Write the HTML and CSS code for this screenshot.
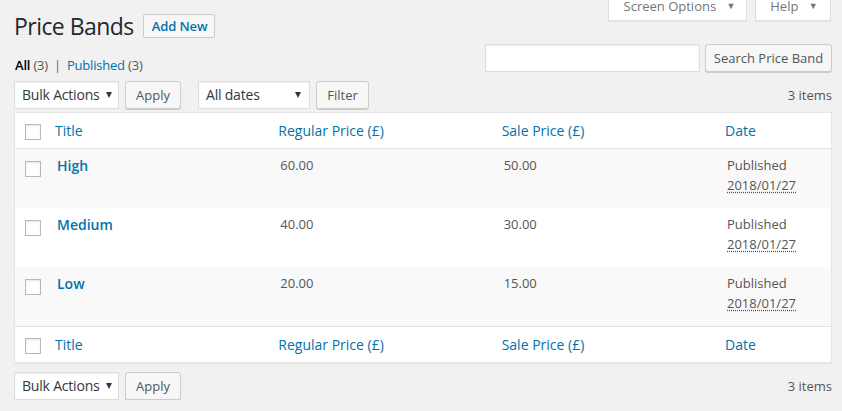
FILE: index.html
```html
<!DOCTYPE html>
<html lang="en">
<head>
<meta charset="utf-8">
<title>Price Bands</title>
<link rel="stylesheet" href="styles.css">
</head>
<body>
<div class="wrap">
  <div class="top">
    <div class="heading">
      <h1 class="title">Price Bands</h1>
      <a class="add-new" href="#">Add New</a>
    </div>
    <div class="screen-links">
      <div class="tab tab-screen">Screen Options <span class="caret">&#9660;</span></div>
      <div class="tab tab-help">Help <span class="caret">&#9660;</span></div>
    </div>
  </div>

  <div class="filters">
    <ul class="subsubsub">
      <li><a class="current" href="#">All</a> <span class="count">(3)</span></li>
      <li class="sep">|</li>
      <li><a href="#">Published</a> <span class="count">(3)</span></li>
    </ul>
    <div class="search-box">
      <div class="input"></div>
      <button class="button search-btn">Search Price Band</button>
    </div>
  </div>

  <div class="tablenav tablenav-top">
    <div class="actions">
      <div class="select select-bulk">Bulk Actions <span class="arrow"></span></div>
      <button class="button btn-apply">Apply</button>
    </div>
    <div class="actions">
      <div class="select select-dates">All dates <span class="arrow"></span></div>
      <button class="button btn-filter">Filter</button>
    </div>
    <div class="num">3 items</div>
  </div>

  <table class="list">
    <colgroup>
      <col class="c-cb"><col class="c-title"><col class="c-reg"><col class="c-sale"><col class="c-date">
    </colgroup>
    <thead>
      <tr>
        <td class="cb"><span class="checkbox"></span></td>
        <th><a href="#">Title</a></th>
        <th><a href="#">Regular Price (£)</a></th>
        <th><a href="#">Sale Price (£)</a></th>
        <th><a href="#">Date</a></th>
      </tr>
    </thead>
    <tbody>
      <tr class="alt">
        <td class="cb"><span class="checkbox"></span></td>
        <td class="t"><a class="row-title" href="#">High</a></td>
        <td>60.00</td>
        <td>50.00</td>
        <td>Published<br><abbr>2018/01/27</abbr></td>
      </tr>
      <tr>
        <td class="cb"><span class="checkbox"></span></td>
        <td class="t"><a class="row-title" href="#">Medium</a></td>
        <td>40.00</td>
        <td>30.00</td>
        <td>Published<br><abbr>2018/01/27</abbr></td>
      </tr>
      <tr class="alt">
        <td class="cb"><span class="checkbox"></span></td>
        <td class="t"><a class="row-title" href="#">Low</a></td>
        <td>20.00</td>
        <td>15.00</td>
        <td>Published<br><abbr>2018/01/27</abbr></td>
      </tr>
    </tbody>
    <tfoot>
      <tr>
        <td class="cb"><span class="checkbox"></span></td>
        <th><a href="#">Title</a></th>
        <th><a href="#">Regular Price (£)</a></th>
        <th><a href="#">Sale Price (£)</a></th>
        <th><a href="#">Date</a></th>
      </tr>
    </tfoot>
  </table>

  <div class="tablenav tablenav-bottom">
    <div class="actions">
      <div class="select select-bulk">Bulk Actions <span class="arrow"></span></div>
      <button class="button btn-apply">Apply</button>
    </div>
    <div class="num">3 items</div>
  </div>
</div>
</body>
</html>
```

FILE: styles.css
```css
html, body {
  margin: 0;
  padding: 0;
  background: #f1f1f1;
}
body {
  font-family: "Open Sans", "Noto Sans", sans-serif;
  font-size: 13px;
  color: #444;
  line-height: 1.4;
}
a { color: #0073aa; text-decoration: none; }

.wrap {
  margin: 0 10px 0 14px;
}

/* top area */
.top {
  display: flex;
  justify-content: space-between;
  align-items: flex-start;
  height: 44px;
}
.heading {
  display: flex;
  align-items: center;
  gap: 9px;
  margin-top: 9px;
}
.title {
  margin: 0;
  font-size: 23px;
  font-weight: 400;
  line-height: 34px;
  color: #23282d;
  letter-spacing: -0.55px;
}
.add-new {
  display: block;
  height: 22px;
  line-height: 22px;
  padding: 0 7px 0 8px;
  border: 1px solid #ccc;
  border-radius: 2px;
  background: #f7f7f7;
  font-weight: 600;
  font-size: 13px;
  color: #0073aa;
  letter-spacing: -0.1px;
}
.screen-links {
  display: flex;
  gap: 8px;
  margin-right: 1px;
}
.tab {
  line-height: 12px;
  border: 1px solid #ddd;
  border-top: 0;
  background: #fff;
  box-shadow: 0 1px 1px rgba(0,0,0,.04);
  color: #72777c;
  box-sizing: border-box;
  height: 21px;
  text-align: center;
}
.tab-screen { width: 139px; padding-left: 4px; }
.tab-help { width: 76px; padding-left: 2px; }
.caret {
  font-size: 9px;
  margin-left: 7px;
  position: relative;
  top: -2px;
}

/* filters row */
.filters {
  display: flex;
  justify-content: space-between;
  align-items: flex-start;
  height: 28px;
}
.subsubsub {
  list-style: none;
  margin: 11px 0 0 1px;
  padding: 0;
  display: flex;
  gap: 6px;
  line-height: 20px;
  color: #666;
  letter-spacing: -0.2px;
}
.subsubsub .current {
  color: #000;
  font-weight: 600;
}
.subsubsub .count { color: #555; }
.subsubsub .sep { color: #666; }
.search-box {
  display: flex;
  gap: 5px;
}
.input {
  width: 215px;
  height: 28px;
  box-sizing: border-box;
  border: 1px solid #ddd;
  background: #fff;
  box-shadow: inset 0 1px 2px rgba(0,0,0,.07);
}

.button {
  font: inherit;
  font-size: 13px;
  height: 28px;
  line-height: 26px;
  box-sizing: border-box;
  padding: 0 10px 1px;
  border: 1px solid #ccc;
  border-radius: 3px;
  background: #f7f7f7;
  box-shadow: 0 1px 0 #ccc;
  color: #555;
  cursor: pointer;
}
.search-btn { width: 127px; padding: 0; }
.btn-apply { width: 56px; padding: 0; }
.btn-filter { width: 53px; padding: 0; }

/* tablenav */
.tablenav {
  display: flex;
  align-items: center;
  height: 28px;
}
.tablenav-top { margin: 9px 0 3px; }
.tablenav-bottom { margin: 9px 0 0; }
.actions {
  display: flex;
  gap: 6px;
  margin-right: 17px;
}
.select {
  display: flex;
  align-items: center;
  justify-content: space-between;
  height: 28px;
  box-sizing: border-box;
  border: 1px solid #ddd;
  background: #fff;
  box-shadow: inset 0 1px 2px rgba(0,0,0,.07);
  color: #32373c;
  font-size: 14px;
  padding: 0 6px 0 7px;
  letter-spacing: -0.2px;
}
.select-bulk { width: 105px; }
.select-dates { width: 112px; padding-right: 8px; }
.arrow {
  width: 0;
  height: 0;
  border-left: 3px solid transparent;
  border-right: 3px solid transparent;
  border-top: 6px solid #32373c;
}
.num {
  margin-left: auto;
  color: #555;
}

/* table */
.list {
  width: 100%;
  border-collapse: separate;
  border-spacing: 0;
  table-layout: fixed;
  background: #fff;
  border: 1px solid #e5e5e5;
  box-shadow: 0 1px 1px rgba(0,0,0,.04);
}
.c-cb { width: 30px; }
.c-date { width: 116px; }
.list th, .list td {
  text-align: left;
  vertical-align: top;
  padding: 8px 10px;
  font-weight: 400;
}
.list thead th, .list thead td {
  border-bottom: 1px solid #e1e1e1;
  line-height: 19px;
}
.list tfoot th, .list tfoot td {
  border-top: 1px solid #e1e1e1;
  line-height: 19px;
}
.list thead th, .list tfoot th { font-size: 14px; }
.list .cb {
  padding: 11px 0 0 10px;
  height: 16px;
}
.list tbody td {
  color: #555;
  line-height: 19.5px;
  height: 44px;
  padding: 7px 10px 8px 12px;
}
.list tbody tr.alt td { background: #f9f9f9; }
.list tbody .cb { padding-top: 12px; padding-left: 10px; }
.checkbox {
  display: block;
  width: 16px;
  height: 16px;
  box-sizing: border-box;
  border: 1px solid #b4b9be;
  background: #fff;
  box-shadow: inset 0 1px 2px rgba(0,0,0,.1);
}
.row-title {
  font-size: 14px;
  font-weight: 600;
}
abbr {
  text-decoration: underline dotted;
  text-underline-offset: 2px;
}
```
